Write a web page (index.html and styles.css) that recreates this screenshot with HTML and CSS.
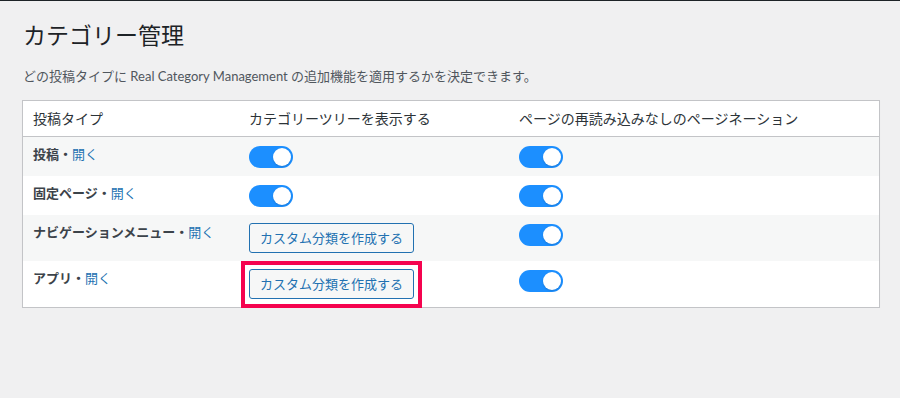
FILE: index.html
```html
<!DOCTYPE html>
<html lang="ja">
<head>
    <meta charset="UTF-8">
    <meta name="viewport" content="width=device-width, initial-scale=1.0">
    <title>カテゴリー管理</title>
    <link rel="stylesheet" href="styles.css">
</head>
<body>
    <div class="admin-bar"></div>

    <div class="wrap">
        <h1>カテゴリー管理</h1>
        <p class="description">どの投稿タイプに Real Category Management の追加機能を適用するかを決定できます。</p>

        <table class="widefat">
            <thead>
                <tr>
                    <th class="col-type">投稿タイプ</th>
                    <th class="col-tree">カテゴリーツリーを表示する</th>
                    <th>ページの再読み込みなしのページネーション</th>
                </tr>
            </thead>
            <tbody>
                <tr class="alt">
                    <td><strong>投稿・</strong><a href="#">開く</a></td>
                    <td><span class="toggle on"></span></td>
                    <td><span class="toggle on"></span></td>
                </tr>
                <tr>
                    <td><strong>固定ページ・</strong><a href="#">開く</a></td>
                    <td><span class="toggle on"></span></td>
                    <td><span class="toggle on"></span></td>
                </tr>
                <tr class="alt">
                    <td><strong>ナビゲーションメニュー・</strong><a href="#">開く</a></td>
                    <td><button class="button">カスタム分類を作成する</button></td>
                    <td><span class="toggle on"></span></td>
                </tr>
                <tr>
                    <td><strong>アプリ・</strong><a href="#">開く</a></td>
                    <td><button class="button highlight">カスタム分類を作成する</button></td>
                    <td><span class="toggle on"></span></td>
                </tr>
            </tbody>
        </table>
    </div>
</body>
</html>
```

FILE: styles.css
```css
html, body {
    margin: 0;
    padding: 0;
}
body {
    font-family: Lato, "Noto Sans CJK JP", sans-serif;
    font-size: 13px;
    line-height: 1.5;
    color: #3c434a;
    background-color: #f0f0f1;
}
.admin-bar {
    height: 1px;
    background-color: #1d2327;
}
.wrap {
    margin: 10px 20px 0 22px;
}
h1 {
    margin: 0;
    padding: 9px 0 4px 1px;
    font-size: 23px;
    font-weight: 400;
    line-height: 30px;
    color: #1d2327;
}
.description {
    margin: 13px 0;
    padding-left: 1px;
    color: #50575e;
    line-height: 19.5px;
}
.widefat {
    width: 100%;
    border-spacing: 0;
    border-collapse: separate;
    background-color: #fff;
    border: 1px solid #c3c4c7;
    box-shadow: 0 1px 1px rgba(0,0,0,0.04);
}
.widefat th {
    text-align: left;
    font-weight: 400;
    font-size: 14px;
    line-height: 19.6px;
    color: #2c3338;
    padding: 8px 10px;
    border-bottom: 1px solid #c3c4c7;
}
.col-type {
    width: 196px;
}
.col-tree {
    width: 250px;
}
.widefat td {
    padding: 8px 10px;
    vertical-align: top;
    line-height: 19.5px;
}
.widefat tr.alt td {
    background-color: #f6f7f7;
}
strong {
    font-weight: 600;
    color: #3c434a;
}
a {
    color: #2271b1;
    text-decoration: none;
}
.toggle {
    display: block;
    position: relative;
    width: 44px;
    height: 22px;
    margin-top: 1px;
    border-radius: 11px;
    background-color: #ccc;
}
.toggle.on {
    background-color: #1c8fff;
}
.toggle::after {
    content: "";
    position: absolute;
    top: 2px;
    left: 2px;
    width: 18px;
    height: 18px;
    border-radius: 50%;
    background-color: #fff;
    box-shadow: 0 1px 2px rgba(0,0,0,0.15);
}
.toggle.on::after {
    left: 24px;
}
.button {
    display: block;
    position: relative;
    font-family: inherit;
    font-size: 13px;
    line-height: 28px;
    min-height: 30px;
    padding: 0 10px;
    color: #2271b1;
    background-color: #f6f7f7;
    border: 1px solid #2271b1;
    border-radius: 3px;
    cursor: pointer;
    white-space: nowrap;
}
/* annotation frame drawn over the button */
.button.highlight::after {
    content: "";
    position: absolute;
    top: -9px;
    left: -9px;
    right: -9px;
    bottom: -10px;
    border: 4px solid #f5034f;
}
```
